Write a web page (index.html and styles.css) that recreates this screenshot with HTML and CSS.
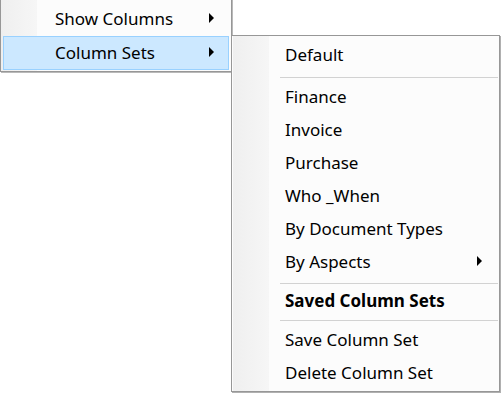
FILE: index.html
```html
<!DOCTYPE html>
<html lang="en">

<head>
  <meta charset="UTF-8">
  <meta name="viewport" content="width=device-width, initial-scale=1.0">
  <title>Column Sets menu</title>
  <link rel="stylesheet" href="styles.css">
</head>

<body>
  <div class="menus">

    <ul class="menu menu-main">
      <li class="item">
        <span class="label">Show Columns</span>
        <span class="arrow"></span>
      </li>
      <li class="item active">
        <span class="label">Column Sets</span>
        <span class="arrow"></span>
      </li>
    </ul>

    <ul class="menu menu-sub">
      <li class="item"><span class="label">Default</span></li>
      <li class="sep sep-top"></li>
      <li class="item"><span class="label">Finance</span></li>
      <li class="item"><span class="label">Invoice</span></li>
      <li class="item"><span class="label">Purchase</span></li>
      <li class="item"><span class="label">Who _When</span></li>
      <li class="item"><span class="label">By Document Types</span></li>
      <li class="item">
        <span class="label">By Aspects</span>
        <span class="arrow"></span>
      </li>
      <li class="sep sep-low"></li>
      <li class="item header"><span class="label">Saved Column Sets</span></li>
      <li class="sep"></li>
      <li class="item"><span class="label">Save Column Set</span></li>
      <li class="item"><span class="label">Delete Column Set</span></li>
    </ul>

  </div>
</body>

</html>
```

FILE: styles.css
```css
html,body {
  box-sizing: border-box;
  margin: 0;
  width: 100%;
  height: 100%;
  background-color: #fff;
}

*,
*:before,
*:after {
  box-sizing: inherit;
}

body {
  font-family: "Noto Sans", "Open Sans", sans-serif;
  font-size: 17px;
  color: #000;
  overflow: hidden;
}

.menus {
  display: flex;
  align-items: flex-start;
}

.menu {
  list-style: none;
  margin: 0;
  border: 1px solid #979797;
  background: linear-gradient(to right, #efefef, #f6f6f6) 0 0 / 36px 100% no-repeat, #fcfcfc;
  display: flex;
  flex-direction: column;
}

/* first level */
.menu-main {
  width: 232px;
  margin-top: -1px;
  padding: 2px 2px 1px 2px;
  box-shadow: 1px 1px 0 #b9b9b9;
}

.menu-main .item {
  height: 34px;
  line-height: 28px;
  padding-left: 51px;
  padding-right: 14px;
}

/* second level */
.menu-sub {
  width: 269px;
  margin-top: 35px;
  margin-left: -1px;
  padding: 2px 1px 2px 1px;
  background-position: 1px 0, 0 0;
  box-shadow: 1px 1px 0 #b0b0b0;
}

.menu-sub .item {
  height: 33px;
  line-height: 31px;
  padding-left: 51px;
  padding-right: 15px;
}

.item {
  display: flex;
  align-items: center;
  justify-content: space-between;
  border: 1px solid transparent;
  white-space: nowrap;
}

.item.active {
  background-color: #cce8ff;
  border-color: #99d1ff;
}

.item.header {
  font-weight: 700;
}

.arrow {
  width: 0;
  height: 0;
  border-left: 5px solid #000;
  border-top: 5px solid transparent;
  border-bottom: 5px solid transparent;
  margin-top: -2px;
}

.sep {
  height: 1px;
  margin: 3px 0 2px 47px;
  background-color: #d2d2d2;
}
.sep-top {
  margin-top: 6px;
}
.sep-low {
  margin-top: 5px;
  margin-bottom: 0;
}
```
